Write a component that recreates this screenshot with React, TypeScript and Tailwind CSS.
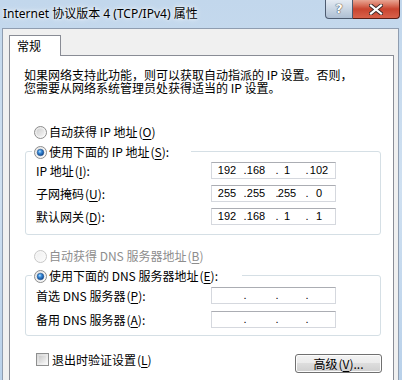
import React from 'react';

const cjk = "font-['SimSun','Noto_Sans_CJK_SC',sans-serif]";

interface RadioProps {
  id: string;
  checked?: boolean;
  disabled?: boolean;
}

const Radio: React.FC<RadioProps> = ({ id, checked, disabled }) => (
  <svg width="13" height="13" viewBox="0 0 13 13" className="shrink-0">
    <defs>
      <linearGradient id={`${id}-o`} x1="0" y1="0" x2="1" y2="1">
        <stop offset="0" stopColor={disabled ? '#f4f4f4' : '#e6e6e6'} />
        <stop offset="1" stopColor={disabled ? '#fbfbfb' : '#fdfdfd'} />
      </linearGradient>
      <linearGradient id={`${id}-i`} x1="0" y1="0" x2="1" y2="1">
        <stop offset="0" stopColor={disabled ? '#f0f0f0' : '#cfcfcf'} />
        <stop offset="1" stopColor={disabled ? '#fafafa' : '#f6f6f6'} />
      </linearGradient>
      <radialGradient id={`${id}-d`} cx="0.4" cy="0.35" r="0.7">
        <stop offset="0" stopColor="#bfe4ff" />
        <stop offset="0.35" stopColor="#3c8fdc" />
        <stop offset="1" stopColor="#0b3f86" />
      </radialGradient>
    </defs>
    <circle cx="6.5" cy="6.5" r="6" fill={`url(#${id}-o)`} stroke={disabled ? '#c8c8c8' : '#8d8d8d'} />
    <circle cx="6.5" cy="6.5" r="4" fill={`url(#${id}-i)`} />
    {checked && <circle cx="6.5" cy="6.5" r="3.3" fill={`url(#${id}-d)`} stroke="#1d4f8c" strokeWidth="0.5" />}
  </svg>
);

// IP address control: four centered fields with dots between them
const IpBox: React.FC<{ parts?: string[] }> = ({ parts }) => {
  const p = parts ?? ['', '', '', ''];
  return (
    <div className="flex h-[17px] w-[125px] items-center border border-[#d5d8de] border-t-[#abadb3] bg-white font-['Liberation_Sans',sans-serif] text-[11px] leading-[15px] text-black">
      <span className="flex w-[30px] justify-center">{p[0]}</span>
      <span className="ml-[2px] flex w-[2px] justify-center">.</span>
      <span className="ml-[1px] flex w-[18px] justify-center">{p[1]}</span>
      <span className="ml-[11px] flex w-[2px] justify-center">.</span>
      <span className="flex w-[18px] justify-center">{p[2]}</span>
      <span className="ml-[10px] flex w-[2px] justify-center">.</span>
      <span className="ml-[2px] flex w-[18px] justify-center">{p[3]}</span>
    </div>
  );
};

const Row: React.FC<{ label: React.ReactNode; parts?: string[] }> = ({ label, parts }) => (
  <div className="flex h-[17px] items-center pl-[10px]">
    <span className="w-[175px] whitespace-nowrap">{label}</span>
    <IpBox parts={parts} />
  </div>
);

const Key: React.FC<{ k: string }> = ({ k }) => (
  <span className="ml-[1px]">(<u className="underline-offset-2">{k}</u>)</span>
);

export default function App() {
  return (
    <div className="h-[380px] w-[402px] overflow-hidden bg-gradient-to-b from-[#c2d7ec] via-[#cfe0f1] to-[#b9d1ea]">
      {/* title bar */}
      <div className="flex h-[28px] items-start justify-between">
        <div className="flex h-[28px] items-center pl-[3px] font-['Noto_Sans','Noto_Sans_CJK_SC',sans-serif] text-[12px] text-black [text-shadow:0_0_6px_#fff,0_0_3px_#fff]">
          Internet 协议版本 4 (TCP/IPv4) 属性
        </div>
        <div className="mr-[2px] flex h-[19px]">
          <div className="flex w-[28px] items-center justify-center rounded-bl-[4px] border border-t-0 border-[#4d5b70] bg-gradient-to-b from-[#e4ebf3] via-[#c9d5e3] to-[#aebfd3] font-['DejaVu_Sans',sans-serif] text-[13px] font-bold text-white [text-shadow:0_0_1px_#333,0_0_1px_#333]">
            ?
          </div>
          <div className="flex w-[47px] items-center justify-center rounded-br-[4px] border border-l-0 border-t-0 border-[#5a1d14] bg-gradient-to-b from-[#e8a593] via-[#c9442f] to-[#d8614a]">
            <svg width="14" height="11" viewBox="0 0 14 11">
              <path d="M2 1.5 L12 9.5 M12 1.5 L2 9.5" stroke="#3b2a28" strokeWidth="4" strokeLinecap="square" />
              <path d="M2 1.5 L12 9.5 M12 1.5 L2 9.5" stroke="#ffffff" strokeWidth="2.2" strokeLinecap="square" />
            </svg>
          </div>
        </div>
      </div>

      {/* client area */}
      <div className={`ml-[2px] h-[360px] w-[397px] border-x border-t border-[#8f9db0] bg-[#f0f0f0] pl-[6px] pr-[4px] pt-[6px] text-[12px] text-black ${cjk}`}>
        <div className="relative z-10 -mb-px flex h-[21px] w-[52px] items-center border border-b-0 border-[#898c95] bg-white pl-[7px]">
          常规
        </div>
        <div className="h-[340px] border border-[#898c95] bg-white pl-[14px] pt-[12px]">
          <p className="whitespace-nowrap leading-[13px]">
            如果网络支持此功能，则可以获取自动指派的 IP 设置。否则，
            <br />
            您需要从网络系统管理员处获得适当的 IP 设置。
          </p>

          <div className="ml-[10px] mt-[30px] flex h-[16px] items-center gap-[2px]">
            <Radio id="r1" />
            <span>
              自动获得 IP 地址<Key k="O" />
            </span>
          </div>

          <div className="ml-[1px] mt-[4px] w-[356px]">
            <div className="relative z-10 ml-[7px] flex h-[16px] w-fit items-center gap-[2px] bg-white pl-[2px] pr-[22px]">
              <Radio id="r2" checked />
              <span>
                使用下面的 IP 地址<Key k="S" />:
              </span>
            </div>
            <div className="-mt-[9px] flex flex-col gap-[6px] rounded-[3px] border border-[#d5dfe5] pb-[9px] pt-[10px]">
              <Row label={<>IP 地址<Key k="I" />:</>} parts={['192', '168', '1', '102']} />
              <Row label={<>子网掩码<Key k="U" />:</>} parts={['255', '255', '255', '0']} />
              <Row label={<>默认网关<Key k="D" />:</>} parts={['192', '168', '1', '1']} />
            </div>
          </div>

          <div className="ml-[10px] mt-[13px] flex h-[16px] items-center gap-[2px] text-[#8d8d8d]">
            <Radio id="r3" disabled />
            <span>
              自动获得 DNS 服务器地址<Key k="B" />
            </span>
          </div>

          <div className="ml-[1px] mt-[4px] w-[356px]">
            <div className="relative z-10 ml-[7px] flex h-[16px] w-fit items-center gap-[2px] bg-white pl-[2px] pr-[24px]">
              <Radio id="r4" checked />
              <span>
                使用下面的 DNS 服务器地址<Key k="E" />:
              </span>
            </div>
            <div className="-mt-[9px] flex flex-col gap-[7px] rounded-[3px] border border-[#d5dfe5] pb-[7px] pt-[11px]">
              <Row label={<>首选 DNS 服务器<Key k="P" />:</>} />
              <Row label={<>备用 DNS 服务器<Key k="A" />:</>} />
            </div>
          </div>

          <div className="mt-[17px] flex items-start justify-between pr-[11px]">
            <div className="ml-[12px] flex h-[13px] items-center gap-[3px]">
              <span className="h-[13px] w-[13px] border border-[#8e8f8f] bg-gradient-to-br from-[#d6d6d6] to-[#fbfbfb] p-[2px]">
                <span className="block h-full w-full bg-gradient-to-br from-[#cbcbcb] to-[#f4f4f4]" />
              </span>
              <span>
                退出时验证设置<Key k="L" />
              </span>
            </div>
            <button className="mt-[1px] flex h-[19px] w-[87px] items-center justify-center rounded-[3px] border border-[#707070] bg-[linear-gradient(#f2f2f2_0%,#ebebeb_50%,#dddddd_50%,#cfcfcf_100%)] text-[12px] [box-shadow:inset_0_0_0_1px_#fcfcfc]">
              高级<Key k="V" />...
            </button>
          </div>
        </div>
      </div>
    </div>
  );
}
